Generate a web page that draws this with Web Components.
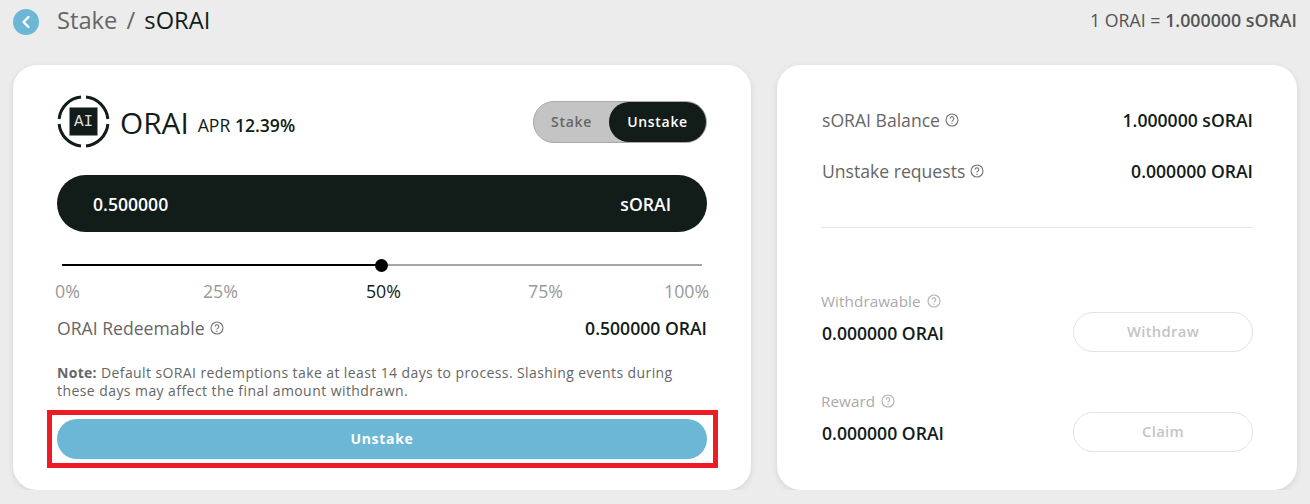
<!DOCTYPE html>
<html>
<head>
<meta charset="utf-8">
<title>Stake sORAI</title>
<style>
	html, body { margin: 0; padding: 0; background: #ececec; }
	body { font-family: "Open Sans", sans-serif; color: #121c19; overflow: hidden; }
</style>
</head>
<body>
<stake-page></stake-page>

<script>
	const HELP_ICON = `<svg width="14" height="14" viewBox="0 0 14 14" fill="none" stroke="currentColor">
		<circle cx="7" cy="7" r="6" stroke-width="1.1"/>
		<path d="M5.2 5.6a1.8 1.8 0 1 1 2.8 1.5c-.7.45-1 .7-1 1.3" stroke-width="1.1"/>
		<circle cx="7" cy="10.2" r=".7" fill="currentColor" stroke="none"/>
	</svg>`;

	class HelpIcon extends HTMLElement {
		constructor() {
			super();
			this.attachShadow({mode: 'open'}).innerHTML = `<style>
				:host { display: inline-flex; color: inherit; opacity: .9; }
			</style>${HELP_ICON}`;
		}
	}

	class PageHeader extends HTMLElement {
		constructor() {
			super();
			this.attachShadow({mode: 'open'}).innerHTML = `<style>
				:host { display: flex; align-items: center; height: 43px; padding: 0 13px; box-sizing: border-box; }
				svg { display: block; margin-right: 18px; }
				h1 { margin: 0 0 2px; font-size: 23.7px; font-weight: 400; line-height: 41px; color: #666; flex: 1; }
				h1 b { font-weight: 400; color: #121c19; }
				h1 i { font-style: normal; margin: 0 3px; }
				p { margin: 0 0 4px; font-size: 17.8px; color: #555; }
				p b { font-weight: 600; }
			</style>
			<svg width="26" height="26" viewBox="0 0 26 26">
				<circle cx="13" cy="13" r="13" fill="#6cb6d6"/>
				<path d="M15.5 8 10.5 13l5 5" fill="none" stroke="#fff" stroke-width="2.4" stroke-linecap="round" stroke-linejoin="round"/>
			</svg>
			<h1>Stake <i>/</i> <b>sORAI</b></h1>
			<p>1 ORAI = <b>1.000000 sORAI</b></p>`;
		}
	}

	class TokenLogo extends HTMLElement {
		constructor() {
			super();
			this.attachShadow({mode: 'open'}).innerHTML = `<style>
				:host { display: block; width: 53px; height: 53px; position: relative; }
				svg { display: block; }
				span { position: absolute; inset: 0; display: flex; align-items: center; justify-content: center;
					font: 16px "Liberation Mono", monospace; color: #dcdcdc; }
			</style>
			<svg width="53" height="53" viewBox="0 0 53 53">
				<g fill="none" stroke="#121c19" stroke-width="3">
					<path d="M24 2.100A24.500 24.500 0 0 0 2.100 24"/>
					<path d="M29 2.100A24.500 24.500 0 0 1 50.900 24"/>
					<path d="M2.100 29A24.500 24.500 0 0 0 24 50.900"/>
					<path d="M50.900 29A24.500 24.500 0 0 1 29 50.900"/>
				</g>
				<rect x="12.500" y="12.500" width="28" height="28" fill="#121c19"/>
			</svg>
			<span>AI</span>`;
		}
	}

	class ModeToggle extends HTMLElement {
		constructor() {
			super();
			this.attachShadow({mode: 'open'}).innerHTML = `<style>
				:host { display: flex; width: 174px; height: 42px; box-sizing: border-box; border: 1px solid #a9a9a9; border-radius: 21px;
					background: #c4c4c4; font-size: 14px; font-weight: 600; letter-spacing: .7px; }
				div { display: flex; align-items: center; justify-content: center; }
				.off { width: 75px; color: #666; }
				.on { flex: 1; background: #121c19; color: #fff; border-radius: 20px; }
			</style>
			<div class="off">Stake</div><div class="on">Unstake</div>`;
		}
	}

	class AmountInput extends HTMLElement {
		constructor() {
			super();
			this.attachShadow({mode: 'open'}).innerHTML = `<style>
				:host { display: flex; align-items: center; justify-content: space-between; height: 57px; padding: 0 36px;
					background: #121c19; color: #fff; border-radius: 28.5px; font-size: 17.6px; font-weight: 600; }
			</style>
			<span>0.500000</span><span>sORAI</span>`;
		}
	}

	class PercentSlider extends HTMLElement {
		constructor() {
			super();
			this.attachShadow({mode: 'open'}).innerHTML = `<style>
				:host { display: block; }
				.track { position: relative; height: 2px; margin: 0 5px; background: #a6a6a6; }
				.fill { height: 2px; width: 50%; background: #000; }
				.dot { position: absolute; left: calc(50% - 7.5px); top: -5.5px; width: 13px; height: 13px; border-radius: 50%; background: #000; }
				.labels { display: flex; margin: 14px -2px 0; font-size: 17.8px; line-height: 22px; color: #999; }
				.labels span:nth-child(2) { margin-left: 123px; }
				.labels b { font-weight: 400; color: #121c19; margin-left: 128px; }
				.labels span:nth-child(4) { margin-left: 127px; }
				.labels span:nth-child(5) { margin-left: 101px; }
			</style>
			<div class="track"><div class="fill"></div><div class="dot"></div></div>
			<div class="labels"><span>0%</span><span>25%</span><b>50%</b><span>75%</span><span>100%</span></div>`;
		}
	}

	class StakeCard extends HTMLElement {
		constructor() {
			super();
			this.attachShadow({mode: 'open'}).innerHTML = `<style>
				:host { display: block; position: relative; width: 738px; height: 425px; box-sizing: border-box; padding: 30px 44px 0;
					background: #fff; border-radius: 24px; box-shadow: 0 2px 6px rgba(0,0,0,.1); }
				.top { display: flex; align-items: center; justify-content: space-between; }
				.token { display: flex; align-items: center; }
				.name { font-size: 29.8px; margin: 2px 0 0 10px; line-height: 51px; color: #121c19; }
				.apr { font-size: 17.6px; margin: 7px 0 0 9px; color: #121c19; }
				.apr b { font-weight: 600; }
				amount-input { margin-top: 27px; }
				percent-slider { margin-top: 32px; }
				.row { display: flex; align-items: center; justify-content: space-between; margin-top: 15px; font-size: 17.6px; line-height: 22px; }
				.row span { display: inline-flex; align-items: center; gap: 5px; color: #666; }
				.row b { font-weight: 600; color: #121c19; }
				.note { margin: 25px 0 0; font-size: 14px; line-height: 18px; letter-spacing: .43px; color: #666; }
				.note b { font-weight: 700; letter-spacing: .3px; }
				.note span { letter-spacing: .4px; }
				.submit { display: flex; align-items: center; justify-content: center; height: 40px; box-sizing: border-box; padding-bottom: 1px; margin-top: 19px; border-radius: 20px;
					background: #6cb6d6; color: #fff; font-size: 14px; font-weight: 700; letter-spacing: .7px; }
				.mark { position: absolute; left: 34px; top: 345px; width: 671px; height: 58px; box-sizing: border-box; border: 5px solid #ed1c24; }
			</style>
			<div class="top">
				<div class="token">
					<token-logo></token-logo>
					<div class="name">ORAI</div>
					<div class="apr">APR <b>12.39%</b></div>
				</div>
				<mode-toggle></mode-toggle>
			</div>
			<amount-input></amount-input>
			<percent-slider></percent-slider>
			<div class="row"><span>ORAI Redeemable <help-icon></help-icon></span><b>0.500000 ORAI</b></div>
			<div class="note">
				<div><b>Note:</b> <span>Default sORAI redemptions take at least 14 days to process. Slashing events during</span></div>
				<div>these days may affect the final amount withdrawn.</div>
			</div>
			<div class="submit">Unstake</div>
			<div class="mark"></div>`;
		}
	}

	class ClaimRow extends HTMLElement {
		constructor() {
			super();
			this.attachShadow({mode: 'open'}).innerHTML = `<style>
				:host { display: flex; align-items: flex-end; justify-content: space-between; }
				.left { padding: 0 0 8px; }
				.label { display: flex; align-items: center; gap: 6px; font-size: 15.2px; line-height: 20px; color: #aaa; letter-spacing: .1px; }
				.value { margin: 11px 0 0 1px; font-size: 17.6px; font-weight: 600; line-height: 22px; color: #121c19; }
				.btn { display: flex; align-items: center; justify-content: center; width: 180px; height: 40px; box-sizing: border-box; padding-bottom: 2px;
					border: 1px solid #e2e2e2; border-radius: 20px; font-size: 14.8px; font-weight: 600; color: #c4c4c4; letter-spacing: .3px; }
			</style>
			<div class="left">
				<div class="label">${this.getAttribute('label')} <help-icon></help-icon></div>
				<div class="value">0.000000 ORAI</div>
			</div>
			<div class="btn">${this.getAttribute('action')}</div>`;
		}
	}

	class BalanceCard extends HTMLElement {
		constructor() {
			super();
			this.attachShadow({mode: 'open'}).innerHTML = `<style>
				:host { display: block; width: 520px; height: 425px; box-sizing: border-box; padding: 44px 44px 0;
					background: #fff; border-radius: 24px; box-shadow: 0 2px 6px rgba(0,0,0,.1); }
				.row { display: flex; align-items: center; justify-content: space-between; font-size: 17.6px; line-height: 22px; margin-bottom: 29px; }
				.row span { display: inline-flex; align-items: center; gap: 5px; color: #666; margin-left: 1px; }
				.row b { font-weight: 600; color: #121c19; }
				hr { border: 0; border-top: 1px solid #e5e5e5; margin: 45px 0 63px; }
				claim-row + claim-row { margin-top: 39px; }
			</style>
			<div class="row"><span>sORAI Balance <help-icon></help-icon></span><b>1.000000 sORAI</b></div>
			<div class="row" style="margin:0"><span>Unstake requests <help-icon></help-icon></span><b>0.000000 ORAI</b></div>
			<hr>
			<claim-row label="Withdrawable" action="Withdraw"></claim-row>
			<claim-row label="Reward" action="Claim"></claim-row>`;
		}
	}

	class StakePage extends HTMLElement {
		constructor() {
			super();
			this.attachShadow({mode: 'open'}).innerHTML = `<style>
				:host { display: block; }
				main { display: flex; gap: 26px; padding: 22px 13px 0; }
			</style>
			<page-header></page-header>
			<main><stake-card></stake-card><balance-card></balance-card></main>`;
		}
	}

	customElements.define('help-icon', HelpIcon);
	customElements.define('page-header', PageHeader);
	customElements.define('token-logo', TokenLogo);
	customElements.define('mode-toggle', ModeToggle);
	customElements.define('amount-input', AmountInput);
	customElements.define('percent-slider', PercentSlider);
	customElements.define('claim-row', ClaimRow);
	customElements.define('stake-card', StakeCard);
	customElements.define('balance-card', BalanceCard);
	customElements.define('stake-page', StakePage);
</script>
</body>
</html>
